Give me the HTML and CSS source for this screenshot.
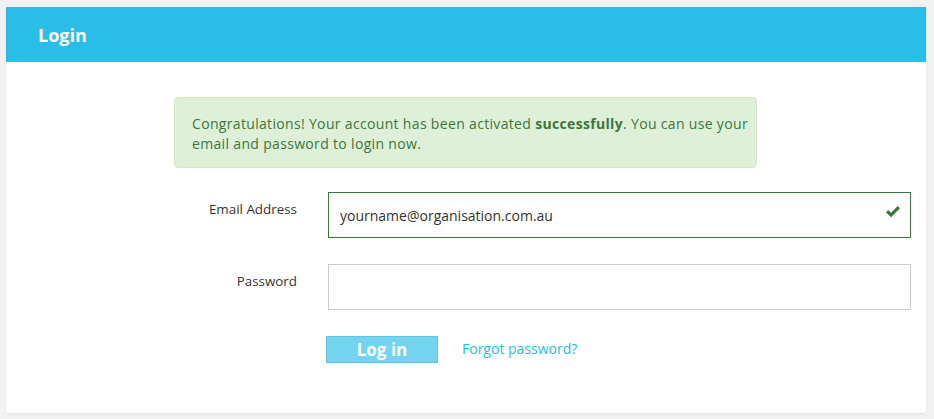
FILE: index.html
```html
<!DOCTYPE html>
<html>
<head>
<meta charset="utf-8">
<link rel="stylesheet" href="styles.css">
</head>
<body>
<div class="panel">
  <div class="panel-header">Login</div>
  <div class="panel-body">
    <div class="form">
      <div class="alert">Congratulations! Your account has been activated <strong>successfully</strong>. You can use your email and password to login now.</div>
      <div class="row">
        <label class="label">Email Address</label>
        <div class="field valid">
          <span class="value">yourname@organisation.com.au</span>
          <svg class="check" width="16" height="13" viewBox="0 0 16 13"><path d="M1 7.2 L3.2 5 L6 7.8 L12.8 1 L15 3.2 L6 12.2 Z" fill="#3c763d"/></svg>
        </div>
      </div>
      <div class="row">
        <label class="label">Password</label>
        <div class="field"></div>
      </div>
      <div class="actions">
        <button class="btn">Log in</button>
        <a class="link" href="#">Forgot password?</a>
      </div>
    </div>
  </div>
</div>
</body>
</html>
```
FILE: styles.css
```css
html, body {
  margin: 0;
  padding: 0;
  background: #f2f2f2;
}
body {
  padding: 7px 8px 6px 6px;
  font-family: "Open Sans", "Noto Sans", sans-serif;
  font-size: 14px;
  color: #333;
}
.panel {
  background: #fff;
  box-shadow: 0 1px 2px rgba(0,0,0,0.08);
  height: 406px;
}
.panel-header {
  background: #2abde6;
  color: #fff;
  font-weight: 700;
  font-size: 18px;
  height: 55px;
  line-height: 57px;
  padding-left: 32px;
  box-sizing: border-box;
}
.panel-body {
  padding: 35px 15px 0 168px;
}
.form {
  display: flex;
  flex-direction: column;
}
.alert {
  width: 583px;
  box-sizing: border-box;
  height: 71px;
  background: #dff0d8;
  border: 1px solid #d6e9c6;
  border-radius: 4px;
  color: #3c763d;
  padding: 16px 4px 0 17px;
  font-size: 14px;
  letter-spacing: 0.33px;
  line-height: 19.5px;
  margin-bottom: 24px;
}
.alert strong { font-weight: 700; }
.row {
  display: flex;
  gap: 31px;
  margin-bottom: 26px;
}
.label {
  width: 123px;
  text-align: right;
  padding-top: 7px;
  line-height: 20px;
  font-size: 13.4px;
  color: #333;
}
.field {
  width: 583px;
  height: 46px;
  box-sizing: border-box;
  border: 1px solid #ccc;
  display: flex;
  align-items: center;
  justify-content: space-between;
  padding: 0 9px 0 11px;
}
.field.valid {
  border-color: #3c763d;
}
.value {
  color: #333;
  font-size: 14px;
}
.check {
  margin-top: -8px;
}
.actions {
  display: flex;
  align-items: center;
  gap: 24px;
  padding-left: 152px;
}
.btn {
  width: 112px;
  height: 27px;
  background: #74d4ef;
  border: 1px solid #5fc6e4;
  color: #fff;
  font-family: "Open Sans", "Noto Sans", sans-serif;
  font-weight: 700;
  font-size: 17px;
  padding: 0;
  line-height: 25px;
}
.link {
  color: #2abde6;
  text-decoration: none;
  font-size: 14px;
  margin-top: -2px;
}
```
